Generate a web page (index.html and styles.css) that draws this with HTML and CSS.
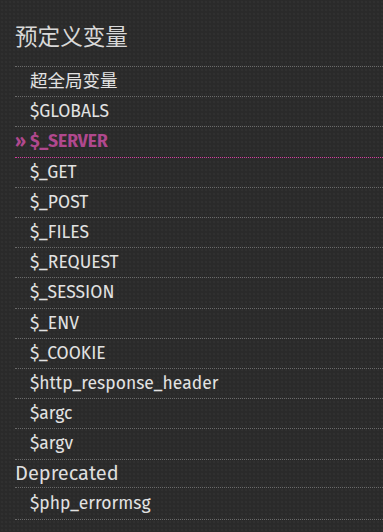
FILE: index.html
```html
<!DOCTYPE html>
<html lang="zh">
  <head>
    <meta charset="UTF-8" />
    <meta name="viewport" content="width=device-width, initial-scale=1.0" />
    <title>预定义变量</title>
    <link rel="stylesheet" href="styles.css">
  </head>
  <body>
    <nav class="toc">
      <h2 class="toc-title">预定义变量</h2>
      <ul class="toc-list">
        <li><a href="#">超全局变量</a></li>
        <li><a href="#">$GLOBALS</a></li>
        <li class="current"><a href="#">$_SERVER</a></li>
        <li><a href="#">$_GET</a></li>
        <li><a href="#">$_POST</a></li>
        <li><a href="#">$_FILES</a></li>
        <li><a href="#">$_REQUEST</a></li>
        <li><a href="#">$_SESSION</a></li>
        <li><a href="#">$_ENV</a></li>
        <li><a href="#">$_COOKIE</a></li>
        <li><a href="#">$http_response_header</a></li>
        <li><a href="#">$argc</a></li>
        <li><a href="#">$argv</a></li>
      </ul>
      <h3 class="toc-group">Deprecated</h3>
      <ul class="toc-list">
        <li class="last"><a href="#">$php_errormsg</a></li>
      </ul>
    </nav>
  </body>
</html>
```

FILE: styles.css
```css
body {
  margin: 0;
  padding: 0;
  background-color: #2a2a2a;
  background-image: radial-gradient(circle, #303030 1px, transparent 1.6px);
  background-size: 4px 4px;
  color: #dcdcdc;
  font-family: "Fira Sans", "Open Sans", "Noto Sans CJK SC", sans-serif;
}
.toc {
  padding: 0 0 0 15px;
}
.toc-title {
  margin: 0;
  padding: 23px 0 13px;
  font-size: 22.6px;
  font-weight: normal;
  line-height: 30px;
  color: #d8d8d8;
}
.toc-list {
  list-style: none;
  margin: 0;
  padding: 0;
  border-top: 1px dotted #6a6a6a;
}
.toc-list li {
  border-bottom: 1px dotted #6a6a6a;
  line-height: 29.2px;
  font-size: 17.5px;
}
.toc-list li.last {
  line-height: 31.5px;
}
.toc-list a {
  display: block;
  padding-left: 15px;
  color: #e2e2e2;
  text-decoration: none;
}
.toc-list li.current {
  border-bottom-color: #d23c9e;
}
.toc-list li.current a {
  padding-left: 0;
  color: #b0488e;
  font-weight: bold;
}
.toc-list li.current a::before {
  content: "» ";
}
.toc-group {
  margin: 0;
  font-size: 20px;
  font-weight: normal;
  line-height: 27px;
  color: #dedede;
}
```
